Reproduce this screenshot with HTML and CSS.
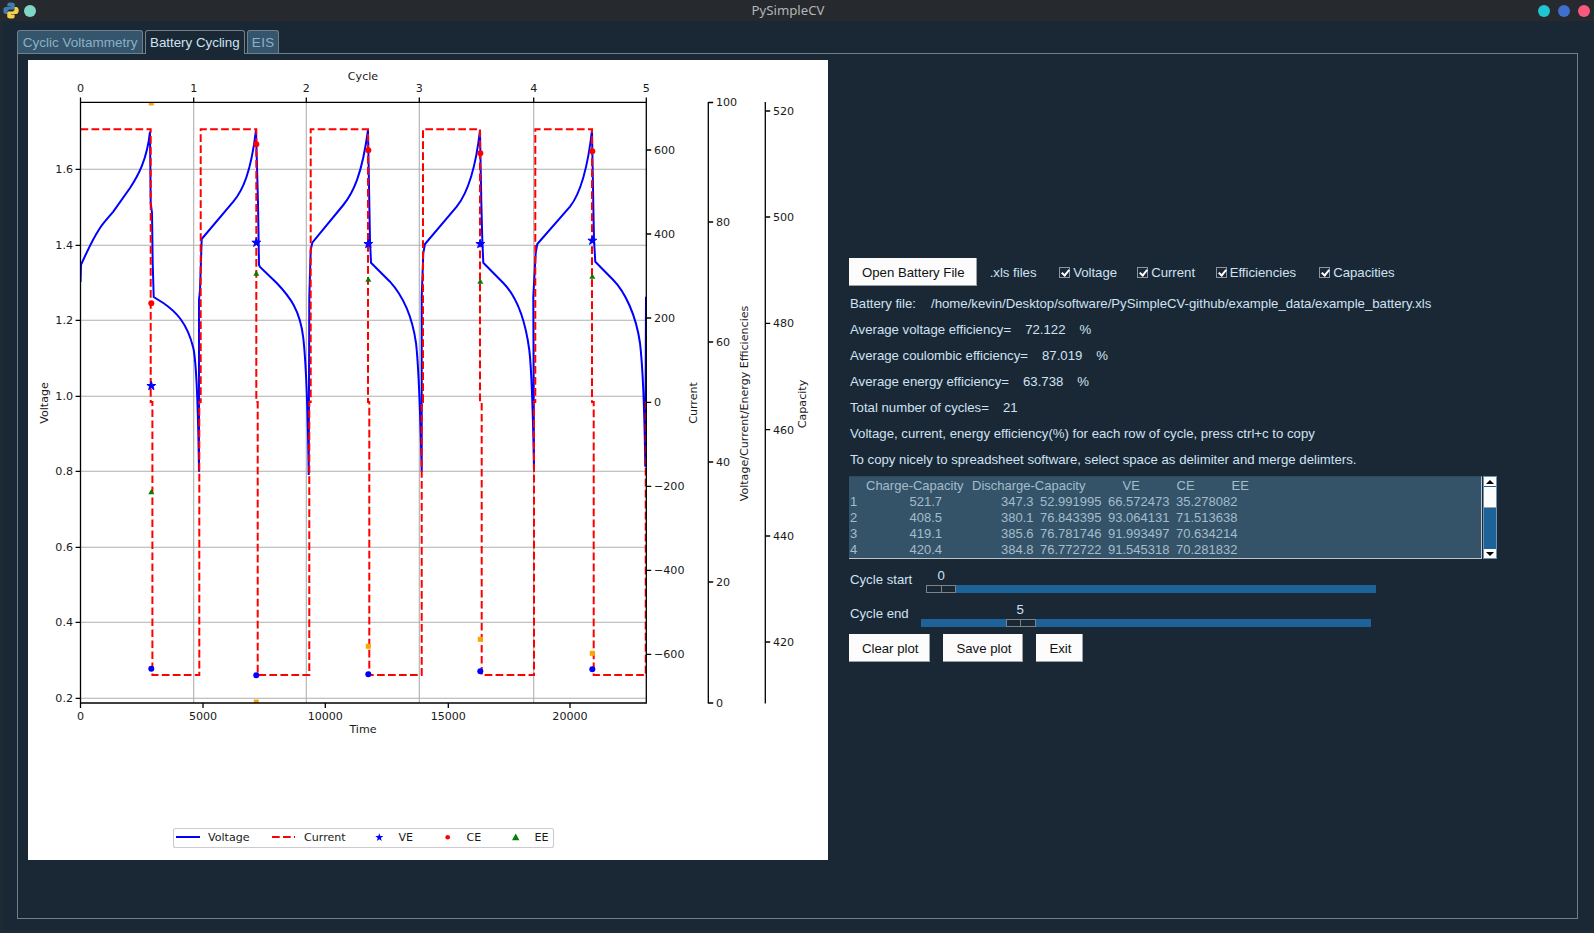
FILE: index.html
```html
<!DOCTYPE html>
<html lang="en">
<head>
    <meta charset="UTF-8">
    <title>PySimpleCV</title>
    <link rel="stylesheet" href="styles.css">
</head>
<body>

    <div class="titlebar">
        <div class="title-left">
            <svg class="pylogo" width="16" height="17" viewBox="0 0 16 17">
                <path fill="#3f7cb0" d="M7.6 .5C4.6 .5 4.4 1.6 4.4 2.6V4.4H8V5H2.8C1.2 5 .3 6.2 .3 8.4S1.3 12 2.8 12H4.4V10C4.4 8.6 5.4 7.6 6.8 7.6H10.2C11.2 7.6 11.8 7 11.8 6V2.6C11.8 1.3 10.4 .5 7.6 .5Z"/>
                <path fill="#f5d04c" d="M8.4 16.5C11.4 16.5 11.6 15.4 11.6 14.4V12.6H8V12H13.2C14.8 12 15.7 10.8 15.7 8.6S14.7 5 13.2 5H11.6V7C11.6 8.4 10.6 9.4 9.2 9.4H5.8C4.8 9.4 4.2 10 4.2 11V14.4C4.2 15.7 5.6 16.5 8.4 16.5Z"/>
            </svg>
            <span class="dot dot-mint"></span>
        </div>
        <div class="title-text">PySimpleCV</div>
        <div class="title-right">
            <span class="dot dot-cyan"></span>
            <span class="dot dot-blue"></span>
            <span class="dot dot-pink"></span>
        </div>
    </div>

    <div class="window">
        <div class="tabs">
            <div class="tab tab-cv">Cyclic Voltammetry</div>
            <div class="tab tab-bc tab-active">Battery Cycling</div>
            <div class="tab tab-eis">EIS</div>
        </div>

        <div class="tab-frame">
            <svg class="plot" width="800" height="800" viewBox="28 60 800 800">
                <rect x="28" y="60" width="800" height="800" fill="#fff"/>

                <g class="grid">
                    <path d="M193.7 102V703M306.3 102V703M419.3 102V703M533.7 102V703"/>
                    <path d="M80.5 169.3H646M80.5 245.3H646M80.5 320.3H646M80.5 396.3H646M80.5 471.3H646M80.5 547.3H646M80.5 622.3H646M80.5 698.3H646"/>
                </g>

                <clipPath id="axes"><rect x="80.5" y="102.3" width="565.8" height="600.7"/></clipPath>
                <g clip-path="url(#axes)">
                    <path class="voltage" d="M80.5 282L81 265C85 256 92 240 100 228C104 222 108 218 113.3 211.7L130 188C138 176 147 160 150 131.7L150.7 203L152 213L152.7 263L153.7 297L163.3 303C175 311 187 322 193.3 348C196.5 362 198 400 199 471.7L199 300L200 290L201.7 239L233.3 201.7C243 190 251 172 256 130L258 203L259 265L260 267L276.7 283C290 297 300 310 303.3 338C305.5 358 307.5 385 308.7 475L309.3 296.7L310.7 250L312.3 242.7L343.3 205C353 193 362 175 368 130L369.3 201.7L370 240L371 262.7L390 281.7C402 295 412 315 416 343C418 360 420 400 421.7 471.7L421.7 296.7L423.3 253L425 244L456.7 206.7C466 195 475 175 480 130L481.3 201.7L482.3 240L483.3 262.7L503.3 283C515 295 525 318 529.3 350C531 365 533 410 534 471.7L533.3 296.7L535.7 253L537.3 244L570 206.7C579 195 587 175 592 130L593.3 205L594 240L595.3 261.7L613.3 280C625 292 636 315 640 343C642 360 644.5 410 645.3 466.7L646 296.7"/>
                    <path class="current" d="M80.5 129.3H150.7V402H152.4V675H199.3V402H200.7V129.3H256.3V402H257.7V675H309.3V402H310.7V129.3H368V402H369.3V675H421.7V402H423V129.3H480V402H481.7V675H534V402H535.3V129.3H592V402H593.7V675H645.7V402H646.3"/>

                    <g fill="#ffa500">
                        <rect x="148.8" y="100.5" width="5" height="5"/>
                        <rect x="253.8" y="699.5" width="5" height="5"/>
                        <rect x="365.8" y="643.8" width="5" height="5"/>
                        <rect x="477.8" y="636.8" width="5" height="5"/>
                        <rect x="589.8" y="650.8" width="5" height="5"/>
                    </g>
                    <g fill="#0000ff">
                        <circle cx="151.3" cy="668.7" r="3"/>
                        <circle cx="256.3" cy="675.3" r="3"/>
                        <circle cx="368.3" cy="674.3" r="3"/>
                        <circle cx="480.3" cy="671.3" r="3"/>
                        <circle cx="592.3" cy="669.3" r="3"/>
                    </g>
                    <g fill="#008000">
                        <path d="M151.3 489l3 5.2h-6z"/>
                        <path d="M256.3 270.5l3 5.2h-6z"/>
                        <path d="M368.3 276.5l3 5.2h-6z"/>
                        <path d="M480.3 278.5l3 5.2h-6z"/>
                        <path d="M592.3 273.5l3 5.2h-6z"/>
                    </g>
                    <g fill="#ff0000">
                        <circle cx="151.3" cy="303.3" r="3"/>
                        <circle cx="256.3" cy="144.3" r="3"/>
                        <circle cx="368.3" cy="150.3" r="3"/>
                        <circle cx="480.3" cy="153.3" r="3"/>
                        <circle cx="592.3" cy="151.3" r="3"/>
                    </g>
                    <g fill="#0000ff">
                        <path class="star" transform="translate(151.3 386)" d="M0-4.6L1.1-1.5H4.4L1.7 .5L2.7 3.7L0 1.8L-2.7 3.7L-1.7 .5L-4.4-1.5H-1.1Z"/>
                        <path class="star" transform="translate(256.3 242.7)" d="M0-4.6L1.1-1.5H4.4L1.7 .5L2.7 3.7L0 1.8L-2.7 3.7L-1.7 .5L-4.4-1.5H-1.1Z"/>
                        <path class="star" transform="translate(368.3 244)" d="M0-4.6L1.1-1.5H4.4L1.7 .5L2.7 3.7L0 1.8L-2.7 3.7L-1.7 .5L-4.4-1.5H-1.1Z"/>
                        <path class="star" transform="translate(480.3 244)" d="M0-4.6L1.1-1.5H4.4L1.7 .5L2.7 3.7L0 1.8L-2.7 3.7L-1.7 .5L-4.4-1.5H-1.1Z"/>
                        <path class="star" transform="translate(592.3 240.7)" d="M0-4.6L1.1-1.5H4.4L1.7 .5L2.7 3.7L0 1.8L-2.7 3.7L-1.7 .5L-4.4-1.5H-1.1Z"/>
                    </g>
                </g>

                <g class="spine">
                    <path d="M80.5 102.3V703.5M80 703H646.8M80 102.3H646.8M646.3 102V703.5"/>
                    <path d="M708.3 102V703.5M765.3 102V703.5"/>
                    <!-- ticks -->
                    <path d="M75.6 169.3H80.5M75.6 245.3H80.5M75.6 320.3H80.5M75.6 396.3H80.5M75.6 471.3H80.5M75.6 547.3H80.5M75.6 622.3H80.5M75.6 698.3H80.5"/>
                    <path d="M80.5 97.4V102.3M193.7 97.4V102.3M306.3 97.4V102.3M419.3 97.4V102.3M533.7 97.4V102.3M646.3 97.4V102.3"/>
                    <path d="M80.5 703V708M203 703V708M325.3 703V708M448.3 703V708M570 703V708"/>
                    <path d="M646.3 150H651.2M646.3 234H651.2M646.3 318H651.2M646.3 402.3H651.2M646.3 486.3H651.2M646.3 570.3H651.2M646.3 654.3H651.2"/>
                    <path d="M708.3 102.5H713.2M708.3 222H713.2M708.3 342H713.2M708.3 462H713.2M708.3 582H713.2M708.3 703H713.2"/>
                    <path d="M765.3 111H770.2M765.3 217H770.2M765.3 323.3H770.2M765.3 429.6H770.2M765.3 536H770.2M765.3 642H770.2"/>
                </g>

                <g class="tick-label tl-end">
                    <text x="73" y="173.3">1.6</text>
                    <text x="73" y="249.3">1.4</text>
                    <text x="73" y="324.3">1.2</text>
                    <text x="73" y="400.3">1.0</text>
                    <text x="73" y="475.3">0.8</text>
                    <text x="73" y="551.3">0.6</text>
                    <text x="73" y="626.3">0.4</text>
                    <text x="73" y="702.3">0.2</text>
                </g>
                <g class="tick-label tl-mid">
                    <text x="80.5" y="92">0</text>
                    <text x="193.7" y="92">1</text>
                    <text x="306.3" y="92">2</text>
                    <text x="419.3" y="92">3</text>
                    <text x="533.7" y="92">4</text>
                    <text x="646.3" y="92">5</text>
                    <text x="80.5" y="720">0</text>
                    <text x="203" y="720">5000</text>
                    <text x="325.3" y="720">10000</text>
                    <text x="448.3" y="720">15000</text>
                    <text x="570" y="720">20000</text>
                    <text x="363" y="80">Cycle</text>
                    <text x="363" y="733">Time</text>
                </g>
                <g class="tick-label">
                    <text x="654" y="154">600</text>
                    <text x="654" y="238">400</text>
                    <text x="654" y="322">200</text>
                    <text x="654" y="406.3">0</text>
                    <text x="654" y="490.3">−200</text>
                    <text x="654" y="574.3">−400</text>
                    <text x="654" y="658.3">−600</text>
                    <text x="716" y="106">100</text>
                    <text x="716" y="226">80</text>
                    <text x="716" y="346">60</text>
                    <text x="716" y="466">40</text>
                    <text x="716" y="586">20</text>
                    <text x="716" y="707">0</text>
                    <text x="773" y="115">520</text>
                    <text x="773" y="221">500</text>
                    <text x="773" y="327.3">480</text>
                    <text x="773" y="433.6">460</text>
                    <text x="773" y="540">440</text>
                    <text x="773" y="646">420</text>
                </g>
                <g class="tick-label tl-mid">
                    <text transform="translate(48 403) rotate(-90)">Voltage</text>
                    <text transform="translate(697 403) rotate(-90)">Current</text>
                    <text transform="translate(748 403.5) rotate(-90)">Voltage/Current/Energy Efficiencies</text>
                    <text transform="translate(806 404) rotate(-90)">Capacity</text>
                </g>

                <!-- legend -->
                <rect class="legend-box" x="173.5" y="828.5" width="380" height="19" rx="2"/>
                <path d="M176 837H200" class="voltage"/>
                <path d="M272 837H295" class="current"/>
                <path fill="#0000ff" transform="translate(379.3 837.5)" d="M0-4.2L1-1.4H4L1.6 .5L2.5 3.4L0 1.7L-2.5 3.4L-1.6 .5L-4-1.4H-1Z"/>
                <circle cx="447.7" cy="837.3" r="2.3" fill="#ff0000"/>
                <path fill="#008000" d="M515.7 833.5l3.7 6.7h-7.4z"/>
                <g class="tick-label">
                    <text x="208" y="841">Voltage</text>
                    <text x="304" y="841">Current</text>
                    <text x="398.5" y="841">VE</text>
                    <text x="466.5" y="841">CE</text>
                    <text x="534.5" y="841">EE</text>
                </g>
            </svg>

            <div class="panel">
                <div class="row-top">
                    <button class="btn">Open Battery File</button>
                    <span class="xls">.xls files</span>
                    <label class="check c-voltage"><span class="box"></span>Voltage</label>
                    <label class="check c-current"><span class="box"></span>Current</label>
                    <label class="check c-eff"><span class="box"></span>Efficiencies</label>
                    <label class="check c-cap"><span class="box"></span>Capacities</label>
                </div>

                <div class="info first"><span class="lab-file">Battery file:</span>/home/kevin/Desktop/software/PySimpleCV-github/example_data/example_battery.xls</div>
                <div class="info"><span class="lab">Average voltage efficiency=</span><span class="val">72.122</span>%</div>
                <div class="info"><span class="lab">Average coulombic efficiency=</span><span class="val">87.019</span>%</div>
                <div class="info"><span class="lab">Average energy efficiency=</span><span class="val">63.738</span>%</div>
                <div class="info"><span class="lab">Total number of cycles=</span>21</div>
                <div class="info">Voltage, current, energy efficiency(%) for each row of cycle, press ctrl+c to copy</div>
                <div class="info">To copy nicely to spreadsheet software, select space as delimiter and merge delimters.</div>

                <div class="table-wrap">
                    <div class="table">
                        <div class="thead">
                            <span>Charge-Capacity</span>
                            <span>Discharge-Capacity</span>
                            <span>VE</span>
                            <span>CE</span>
                            <span>EE</span>
                        </div>
                        <div class="trow"><span>1</span><span>521.7</span><span class="num">347.3</span><span class="num">52.991995</span><span class="num">66.572473</span><span class="num">35.278082</span></div>
                        <div class="trow"><span>2</span><span>408.5</span><span class="num">380.1</span><span class="num">76.843395</span><span class="num">93.064131</span><span class="num">71.513638</span></div>
                        <div class="trow"><span>3</span><span>419.1</span><span class="num">385.6</span><span class="num">76.781746</span><span class="num">91.993497</span><span class="num">70.634214</span></div>
                        <div class="trow"><span>4</span><span>420.4</span><span class="num">384.8</span><span class="num">76.772722</span><span class="num">91.545318</span><span class="num">70.281832</span></div>
                    </div>
                    <div class="scrollbar">
                        <div class="sb-btn"><span class="arrow-up"></span></div>
                        <div class="sb-thumb"></div>
                        <div class="sb-track"></div>
                        <div class="sb-btn"><span class="arrow-down"></span></div>
                    </div>
                </div>

                <div class="slider-row slider-start">
                    <span class="slider-label">Cycle start</span>
                    <div class="slider">
                        <div class="slider-value">0</div>
                        <div class="trough"><div class="handle"></div></div>
                    </div>
                </div>
                <div class="slider-row slider-end">
                    <span class="slider-label">Cycle end</span>
                    <div class="slider">
                        <div class="slider-value">5</div>
                        <div class="trough"><div class="handle"></div></div>
                    </div>
                </div>

                <div class="row-buttons">
                    <button class="btn">Clear plot</button>
                    <button class="btn">Save plot</button>
                    <button class="btn">Exit</button>
                </div>
            </div>
        </div>
    </div>

</body>
</html>
```

FILE: styles.css
```css
html, body {
    margin: 0;
    padding: 0;
}
body {
    width: 1594px;
    height: 933px;
    overflow: hidden;
    background-color: #1a2835;
    font-family: "Liberation Sans", Arial, sans-serif;
    font-size: 13.2px;
    color: #cfe2f3;
}

/* title bar */
.titlebar {
    height: 21px;
    background-color: #26292d;
    display: flex;
    align-items: center;
    justify-content: space-between;
    position: relative;
}
.title-left {
    display: flex;
    align-items: center;
    padding-left: 3px;
    gap: 5px;
}
.pylogo {
    display: block;
}
.title-text {
    font-family: "Noto Sans", sans-serif;
    font-size: 13.2px;
    color: #b4b6b8;
    position: absolute;
    left: 0;
    right: 18px;
    top: 0;
    line-height: 20px;
    text-align: center;
}
.title-right {
    display: flex;
    gap: 8px;
    padding-right: 4px;
}
.dot {
    width: 12px;
    height: 12px;
    border-radius: 50%;
    display: block;
}
.dot-mint { background: #7fd6c8; }
.dot-cyan { background: #1fc6d2; }
.dot-blue { background: #3f6fcf; }
.dot-pink { background: #f9587f; }

/* tabs */
.window {
    height: 912px;
    box-sizing: border-box;
    padding: 9px 16px 0 15px;
    border-left: 2px solid #202a33;
    border-bottom: 3px solid #202a33;
}
.tabs {
    display: flex;
    gap: 1.2px;
    height: 23px;
    font-size: 13.33px;
}
.tab {
    background: #34556b;
    color: #8db0c8;
    padding-top: 3px;
    border: 1px solid #6f7f8c;
    border-bottom: none;
    border-radius: 3px 3px 0 0;
    box-sizing: border-box;
    line-height: 17px;
    text-align: center;
    white-space: nowrap;
}
.tab-cv {
    width: 126.4px;
    font-size: 13.5px;
}
.tab-bc {
    width: 100.5px;
}
.tab-eis {
    width: 32px;
    margin-left: 1px;
    letter-spacing: .5px;
}
.tab-active {
    background: #1a2835;
    color: #cfe2f3;
    height: 24px;
    position: relative;
    z-index: 1;
}
.tab-frame {
    border: 1px solid #6f7f8c;
    height: 866px;
    box-sizing: border-box;
    padding: 6px 0 0 10px;
    display: flex;
    gap: 21px;
}
.plot {
    display: block;
    flex: none;
}
.plot text {
    font-family: "DejaVu Sans", sans-serif;
    font-size: 11.1px;
    fill: #1a1a1a;
}
.tl-end text { text-anchor: end; }
.tl-mid text { text-anchor: middle; }
.grid path {
    stroke: #b0b0b0;
    stroke-width: 1.1;
    fill: none;
}
.spine path {
    stroke: #000;
    stroke-width: 1.3;
    fill: none;
}
.voltage {
    stroke: #0000ff;
    stroke-width: 2;
    fill: none;
}
.current {
    stroke: #ff0000;
    stroke-width: 2;
    stroke-dasharray: 7.7 3.3;
    fill: none;
}
.star {
    stroke: #0000ff;
    stroke-width: 1;
}
.legend-box {
    fill: #fff;
    stroke: #cccccc;
    stroke-width: 1.1;
}

/* right panel */
.panel {
    width: 648px;
    padding-top: 198px;
}
.row-top {
    display: flex;
    align-items: center;
    height: 27px;
}
.btn {
    background-color: #fcfcfc;
    color: #111;
    border: none;
    border-right: 1px solid #9aa2a8;
    border-bottom: 1px solid #9aa2a8;
    padding: 2px 11px 0 13px;
    height: 28px;
    font-family: "Liberation Sans", Arial, sans-serif;
    font-size: 13.2px;
}
.xls {
    margin-left: 13px;
    margin-top: 2px;
    width: 69.5px;
}
.check {
    display: flex;
    align-items: center;
    gap: 3px;
    margin-top: 2px;
}
.c-voltage { width: 78px; }
.c-current { width: 78.5px; }
.c-eff { width: 103.5px; }
.box {
    width: 9px;
    height: 9px;
    background: #1a2835;
    border: 1px solid #8a96a2;
    position: relative;
    display: block;
}
.box::after {
    content: "";
    position: absolute;
    left: 3px;
    top: 0;
    width: 3px;
    height: 6px;
    border-right: 2px solid #fff;
    border-bottom: 2px solid #fff;
    transform: rotate(40deg);
}
.info {
    height: 26px;
    line-height: 26px;
    padding-left: 1px;
    white-space: nowrap;
}
.first {
    margin-top: 6px;
}
.lab-file {
    display: inline-block;
    width: 81px;
}
.lab {
    margin-right: 14px;
}
.val {
    margin-right: 14px;
}

/* table */
.table-wrap {
    display: flex;
    gap: 1px;
    height: 83px;
    margin-top: 3px;
    width: 648px;
}
.table {
    width: 633px;
    background: #345368;
    border-top: 1px solid #2e4a5e;
    border-right: 1px solid #bcc6cc;
    border-bottom: 1px solid #bcc6cc;
    box-sizing: border-box;
    color: #a4bccc;
    font-size: 13px;
    line-height: 16px;
    padding-top: 1px;
}
.thead {
    display: grid;
    grid-template-columns: 106px 150.6px 54px 55px auto;
    padding-left: 17px;
}
.trow {
    display: grid;
    grid-template-columns: 59.5px 32px 92px 68px 68px 68px;
    padding-left: 1px;
}
.num {
    text-align: right;
}
.scrollbar {
    width: 14px;
    background: #1d6299;
    border: 1px solid #6f93b5;
    box-sizing: border-box;
    display: flex;
    flex-direction: column;
}
.sb-btn {
    height: 9px;
    background: #fcfcfc;
    display: flex;
    align-items: center;
    justify-content: center;
    flex: none;
}
.sb-thumb {
    height: 21px;
    margin-top: 1px;
    background: #fcfcfc;
    border-bottom: 1px solid #9aa2a8;
    box-sizing: border-box;
}
.sb-track {
    flex: 1;
}
.arrow-up {
    border-left: 4px solid transparent;
    border-right: 4px solid transparent;
    border-bottom: 4px solid #000;
}
.arrow-down {
    border-left: 4px solid transparent;
    border-right: 4px solid transparent;
    border-top: 4px solid #000;
}

/* sliders */
.slider-row {
    display: flex;
    align-items: flex-end;
    height: 34px;
    padding-left: 1px;
}
.slider-label {
    width: 76px;
    flex: none;
    padding-bottom: 6px;
}
.slider-end .slider-label {
    width: 71px;
}
.slider {
    width: 450px;
    flex: none;
}
.slider-value {
    height: 16px;
    line-height: 14px;
    text-align: left;
}
.slider-start .slider-value {
    padding-left: 11.5px;
}
.slider-end .slider-value {
    padding-left: 95.5px;
}
.trough {
    height: 8px;
    background: #1d6299;
    display: flex;
}
.handle {
    width: 30px;
    height: 8px;
    background:
        linear-gradient(#7b8288, #7b8288) center / 1px 100% no-repeat,
        #1a2835;
    border: 1px solid #7b8288;
    box-sizing: border-box;
}
.slider-end .handle {
    margin-left: 84.5px;
}

.row-buttons {
    display: flex;
    gap: 13px;
    margin-top: 7px;
}
```
